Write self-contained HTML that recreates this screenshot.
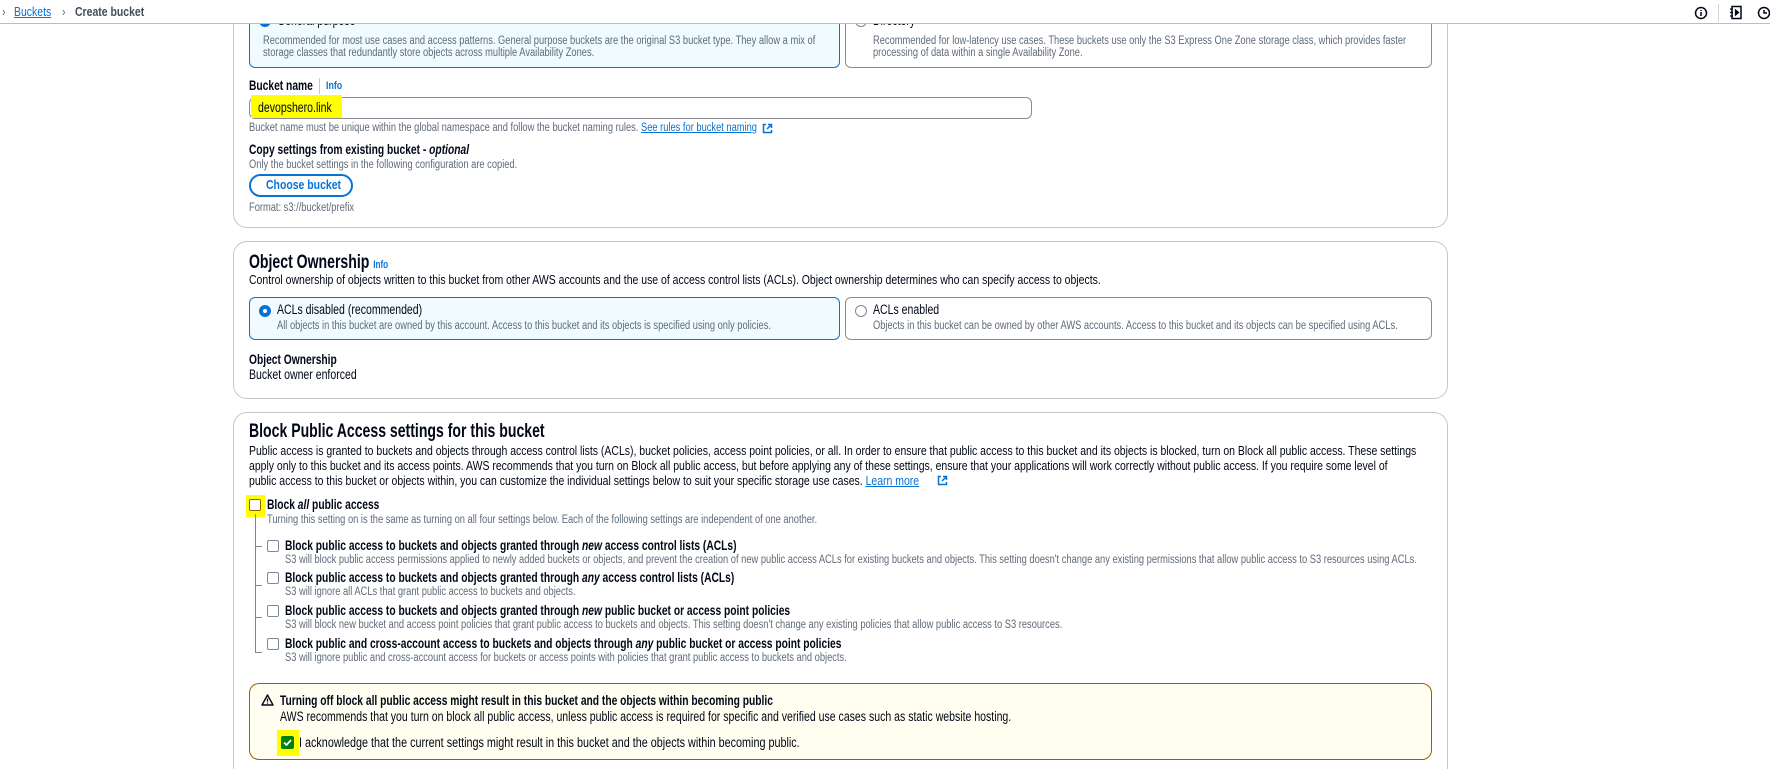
<!DOCTYPE html>
<html><head><meta charset="utf-8"><style>
*{margin:0;padding:0;box-sizing:border-box}
html{width:1770px;height:769px;overflow:hidden}
body{width:1770px;height:769px;overflow:hidden;background:#fff;position:relative;font-family:"Liberation Sans",sans-serif;color:#000716}
.t{position:absolute;white-space:nowrap;line-height:16px;transform:scaleX(.8);transform-origin:0 50%}
.b{font-weight:bold}
.s{font-size:11.5px;color:#5f6b7a;transform:scaleX(.81)}
.m{font-size:13px;transform:scaleX(.805)}
.l{font-size:13.5px;transform:scaleX(.78)}
.l.b{transform:scaleX(.76)}
.h{font-size:19px;font-weight:bold;line-height:22px;transform:scaleX(.74)}
.a{color:#0972d3;text-decoration:underline}
.info{color:#0972d3;font-weight:bold;font-size:11px}
.box{position:absolute;border:1px solid #c6c6cd;border-radius:14px}
.tile{position:absolute;border:1px solid #8c8c94;border-radius:6px}
.sel{border:1.5px solid #0972d3;background:#f0fbff}
.cb{position:absolute;width:12px;height:12px;border:1.5px solid #7d8998;border-radius:2px;background:#fff}
.hl{position:absolute;background:#ffff00}
.radio{position:absolute;width:12px;height:12px;border-radius:50%}
</style></head><body>

<!-- card 1 -->
<div class="box" style="left:233px;top:-20px;width:1215px;height:248px"></div>
<div class="tile sel" style="left:249px;top:-10px;width:591px;height:78px"></div>
<div class="radio" style="left:259px;top:15px;border:4px solid #0972d3;background:#fff"></div>
<div class="t l" style="left:277px;top:13px">General purpose</div>
<div class="t s" style="left:263px;top:33px">Recommended for most use cases and access patterns. General purpose buckets are the original S3 bucket type. They allow a mix of</div>
<div class="t s" style="left:263px;top:45px">storage classes that redundantly store objects across multiple Availability Zones.</div>
<div class="tile" style="left:845px;top:-10px;width:587px;height:78px"></div>
<div class="radio" style="left:855px;top:15px;border:1.5px solid #7d8998"></div>
<div class="t l" style="left:873px;top:13px">Directory</div>
<div class="t s" style="left:873px;top:33px">Recommended for low-latency use cases. These buckets use only the S3 Express One Zone storage class, which provides faster</div>
<div class="t s" style="left:873px;top:45px">processing of data within a single Availability Zone.</div>

<!-- header -->
<div style="position:absolute;left:0;top:0;width:1770px;height:24px;border-bottom:1px solid #b6bec9;background:#fff"></div>
<div class="t m" style="left:2px;top:4px;color:#5f6b7a">&#x203A;</div>
<div class="t m a" style="left:14px;top:4px">Buckets</div>
<div class="t m" style="left:62px;top:4px;color:#5f6b7a">&#x203A;</div>
<div class="t m b" style="left:75px;top:4px;color:#414d5c">Create bucket</div>
<svg style="position:absolute;left:1694px;top:6px" width="14" height="14" viewBox="0 0 14 14"><circle cx="7" cy="7" r="5.5" fill="none" stroke="#000716" stroke-width="1.5"/><path d="M7 6v4M7 4v1" stroke="#000716" stroke-width="1.5"/></svg>
<div style="position:absolute;left:1718px;top:4px;width:1px;height:18px;background:#d1d5db"></div>
<svg style="position:absolute;left:1729px;top:5px" width="14" height="15" viewBox="0 0 14 15"><rect x="3" y="1.5" width="9" height="12" fill="none" stroke="#000716" stroke-width="1.5"/><path d="M1 4h3M1 7.5h3M1 11h3M6.5 5l3 2.5-3 2.5z" stroke="#000716" stroke-width="1.3" fill="#000716"/></svg>
<svg style="position:absolute;left:1757px;top:6px" width="14" height="14" viewBox="0 0 14 14"><circle cx="7" cy="7" r="5.5" fill="none" stroke="#000716" stroke-width="1.5"/><path d="M7 4v3h3" fill="none" stroke="#000716" stroke-width="1.5"/></svg>

<div class="t l b" style="left:249px;top:78px">Bucket name</div>
<div style="position:absolute;left:319px;top:78px;width:1px;height:16px;background:#c6c6cd"></div>
<div class="t info" style="left:326px;top:78px">Info</div>
<div style="position:absolute;left:249px;top:97px;width:783px;height:22px;border:1px solid #8c8c94;border-radius:6px"></div>
<div class="hl" style="left:251px;top:95px;width:91px;height:23px"></div>
<div class="t l" style="left:258px;top:100px">devopshero.link</div>
<div class="t s" style="left:249px;top:120px">Bucket name must be unique within the global namespace and follow the bucket naming rules. <span class="a">See rules for bucket naming</span></div>
<svg style="position:absolute;left:762px;top:123px" width="11" height="11" viewBox="0 0 11 11"><path d="M4 1.5H1.5v8h8V7M6 1.5h3.5V5M9.5 1.5 5 6" fill="none" stroke="#0972d3" stroke-width="1.5"/></svg>
<div class="t l b" style="left:249px;top:142px">Copy settings from existing bucket - <i>optional</i></div>
<div class="t s" style="left:249px;top:157px">Only the bucket settings in the following configuration are copied.</div>
<div style="position:absolute;left:249px;top:174px;width:104px;height:23px;border:2px solid #0972d3;border-radius:12px"></div>
<div class="t m b" style="left:266px;top:177px;color:#0972d3">Choose bucket</div>
<div class="t s" style="left:249px;top:200px">Format: s3://bucket/prefix</div>

<!-- card 2 -->
<div class="box" style="left:233px;top:241px;width:1215px;height:158px"></div>
<div class="t h" style="left:249px;top:252px">Object Ownership <span class="info">Info</span></div>
<div class="t m" style="left:249px;top:272px">Control ownership of objects written to this bucket from other AWS accounts and the use of access control lists (ACLs). Object ownership determines who can specify access to objects.</div>
<div class="tile sel" style="left:249px;top:297px;width:591px;height:43px"></div>
<div class="radio" style="left:259px;top:305px;border:4px solid #0972d3;background:#fff"></div>
<div class="t l" style="left:277px;top:302px">ACLs disabled (recommended)</div>
<div class="t s" style="left:277px;top:318px">All objects in this bucket are owned by this account. Access to this bucket and its objects is specified using only policies.</div>
<div class="tile" style="left:845px;top:297px;width:587px;height:43px"></div>
<div class="radio" style="left:855px;top:305px;border:1.5px solid #7d8998"></div>
<div class="t l" style="left:873px;top:302px">ACLs enabled</div>
<div class="t s" style="left:873px;top:318px">Objects in this bucket can be owned by other AWS accounts. Access to this bucket and its objects can be specified using ACLs.</div>
<div class="t l b" style="left:249px;top:352px">Object Ownership</div>
<div class="t l" style="left:249px;top:367px">Bucket owner enforced</div>

<!-- card 3 -->
<div class="box" style="left:233px;top:412px;width:1215px;height:357px;border-bottom:none;border-radius:14px 14px 0 0"></div>
<div class="t h" style="left:249px;top:421px">Block Public Access settings for this bucket</div>
<div class="t m" style="left:249px;top:443px">Public access is granted to buckets and objects through access control lists (ACLs), bucket policies, access point policies, or all. In order to ensure that public access to this bucket and its objects is blocked, turn on Block all public access. These settings</div>
<div class="t m" style="left:249px;top:458px">apply only to this bucket and its access points. AWS recommends that you turn on Block all public access, but before applying any of these settings, ensure that your applications will work correctly without public access. If you require some level of</div>
<div class="t m" style="left:249px;top:473px">public access to this bucket or objects within, you can customize the individual settings below to suit your specific storage use cases. <span class="a">Learn more</span></div>
<svg style="position:absolute;left:937px;top:475px" width="11" height="11" viewBox="0 0 11 11"><path d="M4 1.5H1.5v8h8V7M6 1.5h3.5V5M9.5 1.5 5 6" fill="none" stroke="#0972d3" stroke-width="1.5"/></svg>

<div class="hl" style="left:246px;top:495px;width:19px;height:22px"></div>
<div class="cb" style="left:249px;top:499px;border-color:#8d6605"></div>
<div class="t l b" style="left:267px;top:497px">Block <i>all</i> public access</div>
<div class="t s" style="left:267px;top:512px">Turning this setting on is the same as turning on all four settings below. Each of the following settings are independent of one another.</div>
<div style="position:absolute;left:255px;top:514px;width:1px;height:139px;background:#7d8998"></div>
<div style="position:absolute;left:255px;top:546px;width:7px;height:1px;background:#7d8998"></div>
<div style="position:absolute;left:255px;top:585px;width:7px;height:1px;background:#7d8998"></div>
<div style="position:absolute;left:255px;top:617px;width:7px;height:1px;background:#7d8998"></div>
<div style="position:absolute;left:255px;top:652px;width:7px;height:1px;background:#7d8998"></div>

<div class="cb" style="left:267px;top:540px"></div>
<div class="t l b" style="left:285px;top:538px">Block public access to buckets and objects granted through <i>new</i> access control lists (ACLs)</div>
<div class="t s" style="left:285px;top:552px">S3 will block public access permissions applied to newly added buckets or objects, and prevent the creation of new public access ACLs for existing buckets and objects. This setting doesn't change any existing permissions that allow public access to S3 resources using ACLs.</div>
<div class="cb" style="left:267px;top:572px"></div>
<div class="t l b" style="left:285px;top:570px">Block public access to buckets and objects granted through <i>any</i> access control lists (ACLs)</div>
<div class="t s" style="left:285px;top:584px">S3 will ignore all ACLs that grant public access to buckets and objects.</div>
<div class="cb" style="left:267px;top:605px"></div>
<div class="t l b" style="left:285px;top:603px">Block public access to buckets and objects granted through <i>new</i> public bucket or access point policies</div>
<div class="t s" style="left:285px;top:617px">S3 will block new bucket and access point policies that grant public access to buckets and objects. This setting doesn't change any existing policies that allow public access to S3 resources.</div>
<div class="cb" style="left:267px;top:638px"></div>
<div class="t l b" style="left:285px;top:636px">Block public and cross-account access to buckets and objects through <i>any</i> public bucket or access point policies</div>
<div class="t s" style="left:285px;top:650px">S3 will ignore public and cross-account access for buckets or access points with policies that grant public access to buckets and objects.</div>

<!-- warning -->
<div style="position:absolute;left:249px;top:683px;width:1183px;height:77px;border:1px solid #8d6605;border-radius:10px;background:#fffef0"></div>
<svg style="position:absolute;left:261px;top:694px" width="13" height="12" viewBox="0 0 13 12"><path d="M6.5 1 12 11H1z" fill="none" stroke="#000716" stroke-width="1.4" stroke-linejoin="round"/><path d="M6.5 4.5v3.2M6.5 8.6v1" stroke="#000716" stroke-width="1.3"/></svg>
<div class="t l b" style="left:280px;top:693px">Turning off block all public access might result in this bucket and the objects within becoming public</div>
<div class="t l" style="left:280px;top:709px">AWS recommends that you turn on block all public access, unless public access is required for specific and verified use cases such as static website hosting.</div>
<div class="hl" style="left:277px;top:730px;width:22px;height:26px"></div>
<div style="position:absolute;left:281px;top:736px;width:13px;height:13px;background:#037f0c;border-radius:2px"></div>
<svg style="position:absolute;left:281px;top:736px" width="13" height="13" viewBox="0 0 13 13"><path d="M3 6.5l2.5 2.5 4.5-5" fill="none" stroke="#fff" stroke-width="1.8"/></svg>
<div class="t l" style="left:299px;top:735px;transform:scaleX(.8)">I acknowledge that the current settings might result in this bucket and the objects within becoming public.</div>
</body></html>
